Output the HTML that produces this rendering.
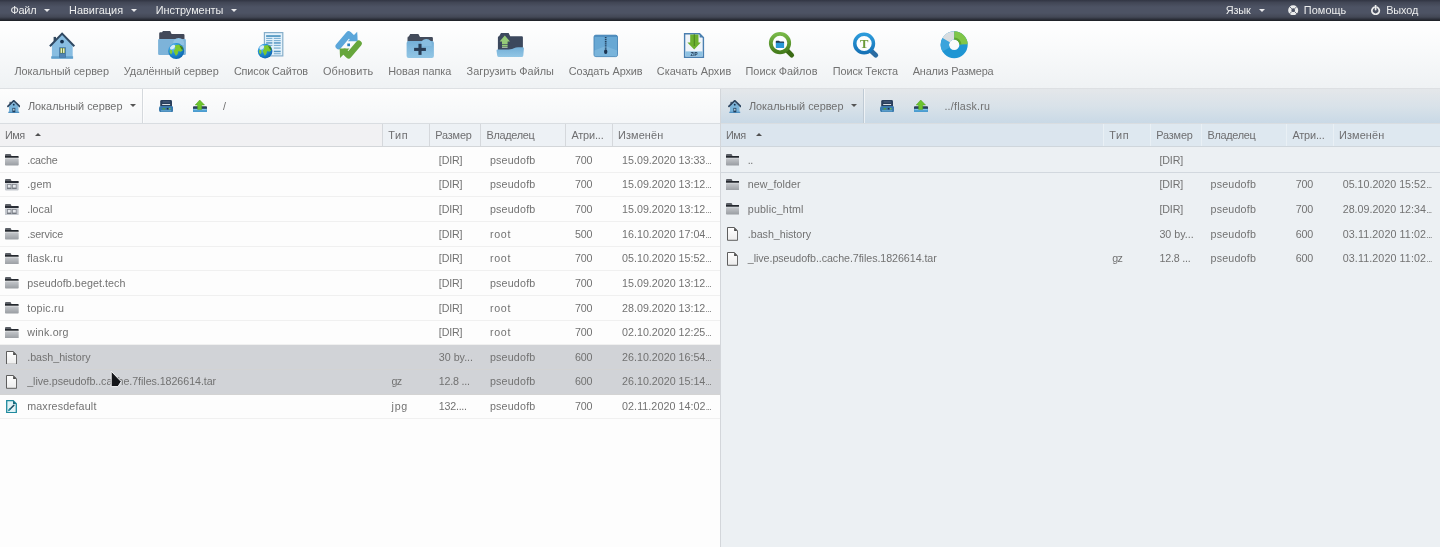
<!DOCTYPE html>
<html lang="ru">
<head>
<meta charset="utf-8">
<title>Файловый менеджер</title>
<style>
*{box-sizing:border-box;margin:0;padding:0}
html,body{width:1440px;height:547px;overflow:hidden;background:#fff}
body{font-family:"Liberation Sans","DejaVu Sans",sans-serif;font-size:10.8px;color:#666;position:relative}
.abs{position:absolute}
#menubar,#toolbar,.panel{will-change:transform}
em{font-style:normal;font-size:8.4px;letter-spacing:-.55px;margin-left:.3px}
#menubar{position:absolute;left:0;top:0;width:1440px;height:20.6px;background:linear-gradient(#313543 0,#414655 2.5px,#4d5364 7px,#4d5364 13px,#434856 17px,#2c2f39 19.3px,#1f2228 20.6px);color:#eceded}
#menubar span{position:absolute;top:0;line-height:20px;white-space:nowrap}
.caret{position:absolute;width:0;height:0;border-left:3.1px solid transparent;border-right:3.1px solid transparent;border-top:3.6px solid #e9eaec}
.caret.dk{border-top-color:#555}
.up{position:absolute;width:0;height:0;border-left:3.1px solid transparent;border-right:3.1px solid transparent;border-bottom:3.6px solid #505050}
#toolbar{position:absolute;left:0;top:20.6px;width:1440px;height:68.4px;background:linear-gradient(#fff,#f9fafb 40%,#eff2f4);border-bottom:1px solid #dde0e3}
#toolbar .lbl{position:absolute;top:43.4px;line-height:14px;color:#727272;white-space:nowrap}
#toolbar .tbi{position:absolute;top:9px}
.panel{position:absolute;top:89px;height:458px;overflow:hidden}
#left{left:0;width:719.5px;background:#fdfdfd}
#right{left:721px;width:719.5px;background:#ecf0f3}
#divider{position:absolute;left:719.5px;top:89px;width:1.8px;height:458px;background:#d3d6da}
.ptb{position:absolute;left:0;top:0;width:100%;height:34.5px;border-bottom:1px solid #d9dde1}
#left .ptb{background:linear-gradient(#fdfdfd,#f4f6f8)}
#right .ptb{background:linear-gradient(#e4e7ea,#d9e2e9 50%,#c9d9e6)}
.ptb .t{position:absolute;top:0;line-height:34px;white-space:nowrap;color:#707070}
.ptb .sep{position:absolute;left:142px;top:0;width:1px;height:34px;background:#d5d9dd;box-shadow:1px 0 0 rgba(255,255,255,.6)}
#right .ptb .sep{background:#bfcad4}
.hdr{position:absolute;left:0;top:34.5px;width:100%;height:23px;border-bottom:1px solid #d3d6d9}
#left .hdr{background:#edf1f5}
#left .hdr .srt{background:#f1f1f3}
#right .hdr{background:#dee8f0;border-bottom-color:#cfd6dc}
#right .hdr .srt{background:#dbe5ee}
#right .hdr i{background:#e9f0f5;margin-left:-.5px}
.hdr span{position:absolute;top:0;line-height:22px;white-space:nowrap;color:#6e6e70}
.hdr i{position:absolute;top:0;width:1.2px;height:22px;background:#d5d8dc}
.hdr .srt{position:absolute;left:0;top:0;width:382.4px;height:22px}
.row{position:absolute;left:0;width:100%;white-space:nowrap;border-bottom:1px solid #f0f0f0}
.row .in{position:absolute;left:0;width:100%;height:24px}
#right .row .in{left:-.4px}
.row span{position:absolute;top:.5px;line-height:23px;color:#727272}
#right .row{border-bottom-color:#d2d8de}
.row.nb{border-bottom:none}
.row.sel{background:#d1d3d7;border-bottom-color:#d3d3d3}
</style>
</head>
<body>
<svg width="0" height="0" style="position:absolute">
<defs>
<linearGradient id="gFold" x1="0" y1="0" x2="0" y2="1"><stop offset="0" stop-color="#c4c7cb"/><stop offset="1" stop-color="#999da2"/></linearGradient>
<linearGradient id="gFile" x1="0" y1="0" x2="0" y2="1"><stop offset="0" stop-color="#ffffff"/><stop offset="1" stop-color="#ececec"/></linearGradient>
<linearGradient id="gBody" x1="0" y1="0" x2="0" y2="1"><stop offset="0" stop-color="#74afd7"/><stop offset="1" stop-color="#92c6e5"/></linearGradient>
<linearGradient id="gRingG" x1="0" y1="0" x2="0" y2="1"><stop offset="0" stop-color="#78b848"/><stop offset="1" stop-color="#457d1c"/></linearGradient>
<linearGradient id="gRingB" x1="0" y1="0" x2="0" y2="1"><stop offset="0" stop-color="#2c9bdb"/><stop offset="1" stop-color="#1672b6"/></linearGradient>
<radialGradient id="gGlobe" cx="0.35" cy="0.3" r="0.8"><stop offset="0" stop-color="#7cc8f2"/><stop offset="0.45" stop-color="#1f8fd8"/><stop offset="1" stop-color="#0c5fa8"/></radialGradient>
<g id="globe">
<circle cx="0" cy="0" r="8" fill="url(#gGlobe)"/>
<path d="M-1.5,-5.6 L2.5,-6.6 L6,-4.6 L5.2,-2.2 L6.6,-0.6 L4.4,0.6 L2.2,0 L1.6,2.6 L-0.2,5 L-1.6,2.4 L-2.6,-0.6 L-0.8,-2.4 Z" fill="#7cc82e"/>
<path d="M3.2,-5.6 L6,-4.4 L7.2,-1.6 L5.4,-1.8 Z" fill="#3e7a14"/>
<path d="M-6.6,-0.8 L-4.6,-1.4 L-3.8,1 L-5,3.4 L-6.4,2 Z" fill="#86cc34"/>
<ellipse cx="-3.6" cy="-4" rx="3" ry="1.8" transform="rotate(-38 -3.6 -4)" fill="#fff" opacity=".75"/>
</g>
<g id="fold"><path d="M0,1 Q0,0 1,0 H5.6 L6.6,2.2 H0 Z" fill="#5c6067"/><path d="M0,2 H13 Q13.7,2 13.7,2.7 V3.7 H0 Z" fill="#24282e"/><rect x="0" y="4.3" width="13.7" height="7.2" rx=".8" fill="url(#gFold)"/></g>
<g id="foldx"><path d="M0,1 Q0,0 1,0 H5.6 L6.6,2.2 H0 Z" fill="#5c6067"/><path d="M0,1.9 H13 Q13.7,1.9 13.7,2.6 V4 H0 Z" fill="#2a2e36"/><rect x="0" y="4.2" width="13.7" height="7.2" rx=".8" fill="#c3c7cd"/><rect x="2.4" y="5.6" width="3.6" height="3.4" fill="#e6e9ed" stroke="#858991" stroke-width=".8"/><rect x="7.6" y="5.6" width="3.6" height="3.4" fill="#e6e9ed" stroke="#858991" stroke-width=".8"/><rect x="2" y="8.9" width="4.4" height=".9" fill="#686c74"/><rect x="7.2" y="8.9" width="4.4" height=".9" fill="#686c74"/></g>
<g id="file"><path d="M0.5,0.5 H7.3 L10.6,3.8 V13.3 H0.5 Z" fill="url(#gFile)" stroke="#5c5c5c" stroke-width="1"/><path d="M7.1,0.6 L10.5,4 H7.1 Z" fill="#4c4c4c"/></g>
<g id="img"><path d="M0.7,0.7 H7.2 L10.3,3.8 V12.7 H0.7 Z" fill="#e2f3f6" stroke="#1f8a9e" stroke-width="1.3"/><path d="M7,0.8 L10.2,4 H7 Z" fill="#17687a"/><path d="M7.9,5.2 L3.6,9.5" stroke="#1b4a60" stroke-width="1.5" stroke-linecap="round"/><path d="M3.9,9.2 L2.9,10.3" stroke="#1f8a9e" stroke-width="1.7" stroke-linecap="round"/></g>
<g id="home16"><rect x="2.5" y="1.8" width="1.3" height="3" fill="#34495e"/><path d="M2,6.6 L6.75,1.9 L11.5,6.6 V12.4 H2 Z" fill="#7ab4da"/><rect x="1.3" y="11.7" width="10.9" height="1.3" fill="#4f92c4"/><path d="M0.4,6.9 L6.75,0.7 L13.1,6.9" fill="none" stroke="#2c4560" stroke-width="1.7"/><rect x="5.4" y="7.9" width="2.9" height="4.4" fill="#20405e"/><rect x="6.2" y="8.7" width="1.3" height="1.9" fill="#cfe4f2"/><circle cx="6.75" cy="4.7" r=".9" fill="#14304e"/></g>
<g id="drive16"><path d="M2.6,0 H11.6 Q13,0 13,1.4 V6.4 H1.2 V1.4 Q1.2,0 2.6,0 Z" fill="#2a3f5c"/><rect x="3.6" y="1.5" width="7.2" height=".9" fill="#52698a"/><rect x="3.2" y="4" width="7.9" height=".9" fill="#eef2f6"/><rect x="0" y="5.9" width="14.25" height="6.3" rx="2.2" fill="#3a7aac"/><rect x="3.6" y="8.1" width="2.6" height="1.3" fill="#58a03a"/><rect x="7.8" y="7.9" width="1.6" height="1.6" fill="#1c3048"/><rect x="10" y="8.1" width="1.5" height="1.3" fill="#78c450"/><rect x="2" y="10.5" width="10.2" height=".8" fill="#7cc0e8"/></g>
<g id="up16"><rect x="0" y="6.2" width="14" height="3" rx=".9" fill="#2a3f5c"/><rect x="0" y="8.7" width="14" height="3.8" rx=".9" fill="#4a9cd0"/><rect x="0.6" y="9.3" width="12.8" height=".8" fill="#9ad4f2"/><path d="M6.75,0 L11.5,5 H8.7 V9.4 H4.6 V5 H2.2 Z" fill="#6cc42c" stroke="#4e9e1e" stroke-width=".5"/></g>
<g id="m_help"><circle cx="5.2" cy="5.2" r="3.45" fill="none" stroke="#eceded" stroke-width="3.2"/><path d="M1.4,1.4 L3.9,3.9 M9,1.4 L6.5,3.9 M1.4,9 L3.9,6.5 M9,9 L6.5,6.5" stroke="#4a5060" stroke-width=".8"/></g>
<g id="m_exit"><path d="M3.1,2.2 A3.7,3.7 0 1 0 6.1,2.2" fill="none" stroke="#eceded" stroke-width="1.7" stroke-linecap="round"/><path d="M4.6,0.6 V4.6" stroke="#eceded" stroke-width="1.7" stroke-linecap="round"/></g>
<g id="cursor"><path d="M1.2,1.2 L11.2,11.6 L8,16.6 H1.2 Z" fill="#15161a" stroke="#f2f2f4" stroke-width="1" stroke-linejoin="round"/></g>
</defs>
</svg>
<div id="menubar">
<span style="left:10.4px;font-size:10.9px;letter-spacing:-0.20px">Файл</span>
<span style="left:69.0px;font-size:10.9px;letter-spacing:0.04px">Навигация</span>
<span style="left:155.8px;font-size:10.9px;letter-spacing:-0.03px">Инструменты</span>
<span style="left:1225.8px;font-size:10.9px;letter-spacing:-0.19px">Язык</span>
<span style="left:1303.8px;font-size:10.9px;letter-spacing:0.08px">Помощь</span>
<span style="left:1386.2px;font-size:10.9px;letter-spacing:-0.10px">Выход</span>
<b class="caret" style="left:44.0px;top:8.8px"></b><b class="caret" style="left:131.0px;top:8.8px"></b><b class="caret" style="left:231.0px;top:8.8px"></b><b class="caret" style="left:1259.0px;top:8.8px"></b>
<svg class="abs" style="left:1288.3px;top:5px" width="10.4" height="10.4" viewBox="0 0 10.4 10.4"><use href="#m_help"/></svg>
<svg class="abs" style="left:1371.2px;top:4.8px" width="9.4" height="10" viewBox="0 0 9.4 10"><use href="#m_exit"/></svg>
</div>
<div id="toolbar">
<span class="lbl" style="left:14.4px;font-size:10.9px">Локальный сервер</span>
<span class="lbl" style="left:123.8px;font-size:10.9px;letter-spacing:-0.02px">Удалённый сервер</span>
<span class="lbl" style="left:233.9px;font-size:10.9px;letter-spacing:-0.16px">Список Сайтов</span>
<span class="lbl" style="left:322.9px;font-size:10.9px;letter-spacing:0.14px">Обновить</span>
<span class="lbl" style="left:388.2px;font-size:10.9px;letter-spacing:-0.03px">Новая папка</span>
<span class="lbl" style="left:466.6px;font-size:10.9px">Загрузить Файлы</span>
<span class="lbl" style="left:568.8px;font-size:10.9px;letter-spacing:-0.09px">Создать Архив</span>
<span class="lbl" style="left:656.8px;font-size:10.9px">Скачать Архив</span>
<span class="lbl" style="left:745.5px;font-size:10.9px">Поиск Файлов</span>
<span class="lbl" style="left:832.8px;font-size:10.9px;letter-spacing:-0.12px">Поиск Текста</span>
<span class="lbl" style="left:912.8px;font-size:10.9px;letter-spacing:-0.19px">Анализ Размера</span>
</div>
<svg class="abs" style="left:0;top:0" width="1440" height="89" viewBox="0 0 1440 89">
<!-- local server -->
<g>
<rect x="53.6" y="36.9" width="2.4" height="4.4" fill="#34495e"/>
<path d="M51.9,45 L62.1,34.2 L72.7,45 V58.5 H51.9 Z" fill="#88bde1"/>
<rect x="51.2" y="56.3" width="21.9" height="2.4" fill="#5f9fcc"/>
<path d="M49.9,46.3 L62.1,33.6 L74.3,46.3" fill="none" stroke="#2f4862" stroke-width="2"/>
<circle cx="62" cy="41.6" r="1.9" fill="#14304e"/>
<rect x="59.2" y="47.3" width="6.6" height="10.4" fill="#3d6f9c"/>
<rect x="60" y="48" width="5" height="5.2" fill="#5c7d34"/>
<rect x="60.6" y="48.3" width="1.5" height="4.6" fill="#e8f0c4"/>
<rect x="63" y="48.3" width="1.5" height="4.6" fill="#e8f0c4"/>
<rect x="60" y="53.7" width="5" height="3.8" fill="#4f83b4"/>
</g>
<!-- remote server -->
<g>
<path d="M159.2,39.5 V33.4 Q159.2,32.2 160.4,32.2 H162 L163,31 H170.2 L171.6,34.1 H183.4 Q184.5,34.1 184.5,35.2 V39.5 Z" fill="#424858"/>
<rect x="158.1" y="38.9" width="27.8" height="16" rx="1.2" fill="#7db3d9"/>
<path d="M173.2,45 A5.6,5.6 0 1 1 184,45 Z" fill="#8fc2e4"/>
<use href="#globe" transform="translate(176.2 51.1)"/>
</g>
<!-- sites list -->
<g>
<rect x="264.4" y="32.6" width="18.4" height="23.3" fill="#e4f2fb" stroke="#86aeca" stroke-width="1.2"/>
<rect x="266.1" y="35.1" width="14.6" height="1.9" fill="#5d9ec6"/>
<g fill="#5596c2">
<rect x="266.1" y="37.9" width="6.3" height=".8"/><rect x="273.8" y="37.9" width="6.9" height=".8"/>
<rect x="266.1" y="40.3" width="6.3" height=".8"/><rect x="273.8" y="40.3" width="6.9" height=".8"/>
<rect x="266.1" y="42.2" width="6.3" height="1.5"/><rect x="273.8" y="42.2" width="6.9" height="1.5"/>
<rect x="266.1" y="44.9" width="6.3" height=".8"/><rect x="273.8" y="44.9" width="6.9" height=".8"/>
<rect x="273.8" y="47.6" width="6.9" height=".9"/>
<rect x="273.8" y="50.7" width="6.9" height="1.5"/>
<rect x="273.8" y="53.4" width="6.9" height=".8"/>
</g>
<use href="#globe" transform="translate(265.1 51.1) scale(.92)"/>
</g>
<!-- refresh -->
<g>
<g id="rfa">
<path d="M338.5,46.2 L348.7,34.2 L352.6,37.9" fill="none" stroke="#5ba6da" stroke-width="6" stroke-linecap="round" stroke-linejoin="round"/>
<path d="M357.2,31.8 L357.7,41.2 L347.8,41.2 Z" fill="#5ba6da"/>
</g>
<g transform="rotate(180 348.65 44.85)">
<path d="M338.5,46.2 L348.7,34.2 L352.6,37.9" fill="none" stroke="#66a63c" stroke-width="6" stroke-linecap="round" stroke-linejoin="round"/>
<path d="M357.2,31.8 L357.7,41.2 L347.8,41.2 Z" fill="#66a63c"/>
</g>
<rect x="347.3" y="43.5" width="2.7" height="2.7" fill="#2a80c0"/>
</g>
<!-- new folder -->
<g>
<path d="M407.5,41.6 V37.9 Q407.5,36.6 408.8,36.6 L410.2,34.1 H418.4 L420,36.9 H431.8 Q432.9,36.9 432.9,38 V41.6 Z" fill="#434b5b"/>
<rect x="406.6" y="41" width="27.3" height="17" rx="2" fill="url(#gBody)"/>
<path d="M420.9,46 A5.6,5.6 0 1 1 431.7,46 Z" fill="#88bee1"/>
<rect x="414.1" y="47.85" width="11.8" height="3.1" fill="#283c54"/>
<rect x="418.45" y="43.8" width="3.1" height="11.1" fill="#283c54"/>
</g>
<!-- upload -->
<g>
<path d="M497.9,50.4 V37.4 Q497.9,36.2 499.1,36.2 L501,32.9 H508.6 L510.2,36.2 H521.8 Q522.9,36.2 522.9,37.3 V50.4 Z" fill="#3c485d"/>
<path d="M496.5,50.6 Q496.5,49.4 497.7,49.4 H508.6 Q511.8,49.4 513.8,48.3 Q515.8,47.3 518,47.3 H522.7 Q523.9,47.3 523.9,48.5 L523.3,55.4 Q523.1,57 521.5,57 H499 Q497.4,57 497.2,55.4 Z" fill="url(#gBody)"/>
<path d="M504.8,35.5 L510,41.4 H507.6 V44.2 H502 V41.4 H499.6 Z" fill="#96cb78"/>
<rect x="502" y="44.9" width="5.6" height="1.7" fill="#96cb78"/>
<rect x="502" y="47.2" width="5.6" height=".7" fill="#cfe6c0"/>
</g>
<!-- create archive -->
<g>
<rect x="594" y="35.2" width="23.5" height="21.4" rx="1.8" fill="#68a8d4" stroke="#4684b6" stroke-width=".9"/>
<path d="M594.4,56.2 V50.4 L605.6,46 L617.1,50.4 V56.2 Z" fill="#8ec4e4" opacity=".45"/>
<path d="M595.8,35.2 H615.7 Q617.5,35.2 617.5,36.8 H594 Q594,35.2 595.8,35.2 Z" fill="#4a88ba"/>
<path d="M605.7,36.9 V50.6" stroke="#22405e" stroke-width="1.7" stroke-dasharray="1.3 .8"/>
<ellipse cx="605.7" cy="51.8" rx="1.7" ry="2.3" fill="#1c3450"/>
</g>
<!-- download archive -->
<g>
<path d="M684.6,33.7 H699.6 L703.4,37.5 V57.2 H684.6 Z" fill="#f0f4f9" stroke="#4a7fb0" stroke-width="1.4"/>
<path d="M699.6,33.7 V37.5 H703.4 Z" fill="#4a7fb0"/>
<rect x="685.3" y="51.4" width="17.4" height="5.1" fill="#8ec2e3"/>
<text x="694" y="55.9" text-anchor="middle" font-family="Liberation Sans, sans-serif" font-weight="bold" font-size="4.6" fill="#1f3550">ZIP</text>
<path d="M690.2,34.4 H698.5 V42.4 H700.8 L694.2,49.4 L687.4,42.4 H690.2 Z" fill="#6bb02e"/>
<path d="M694.3,34.6 V46" stroke="#2c5a10" stroke-width="1.1" stroke-dasharray="1 1"/>
</g>
<!-- search files -->
<g>
<path d="M786.6,50 L791.7,55.1" stroke="#3a6a14" stroke-width="4.8" stroke-linecap="round"/>
<circle cx="780" cy="43.1" r="9.2" fill="#fdfefe" stroke="url(#gRingG)" stroke-width="3.8"/>
<path d="M775.8,43 V41.3 Q775.8,40.7 776.5,40.7 H779 L780,41.6 H783.4 Q784.1,41.6 784.1,42.3 V43 Z" fill="#23384e"/>
<rect x="775.8" y="42.8" width="8.3" height="5.2" rx=".6" fill="#2a98d8"/>
</g>
<!-- search text -->
<g>
<path d="M870.7,50.4 L875.8,55.2" stroke="#2a6ca2" stroke-width="4.8" stroke-linecap="round"/>
<circle cx="864.1" cy="43.5" r="9.35" fill="#fdfefe" stroke="url(#gRingB)" stroke-width="3.5"/>
<text x="864.1" y="48.1" text-anchor="middle" font-family="Liberation Serif, serif" font-weight="bold" font-size="12.6" fill="#6b9b38">T</text>
</g>
<!-- size analysis -->
<g fill="none" stroke-width="8.3">
<circle cx="954.2" cy="44.8" r="9.35" stroke="#1e95d3"/>
<path d="M946.1,49.48 A9.35,9.35 0 0 1 946.1,40.13" stroke="#3aa4dc"/>
<path d="M946.1,40.13 A9.35,9.35 0 0 1 954.2,35.45" stroke="#d9dde0"/>
<path d="M954.2,35.45 A9.35,9.35 0 0 1 963.54,44.4" stroke="#80c648"/>
<path d="M954.2,38.6 A6.2,6.2 0 0 1 960.4,44.5" stroke="#5fa630" stroke-width="2"/>
</g>
</svg>
<div id="left" class="panel">
<div class="ptb"><svg class="abs" style="left:6.75px;top:11px" width="13.5" height="13" viewBox="0 0 13.5 13"><use href="#home16"/></svg><span class="t" style="left:27.9px;font-size:10.9px">Локальный сервер</span><b class="caret dk" style="left:129.5px;top:15.2px"></b><i class="sep"></i><svg class="abs" style="left:159px;top:11px" width="14.25" height="12.25" viewBox="0 0 14.25 12.25"><use href="#drive16"/></svg><svg class="abs" style="left:193px;top:10.5px" width="14" height="12.5" viewBox="0 0 14 12.5"><use href="#up16"/></svg><span class="t" style="left:222.9px;font-size:10.7px">/</span></div>
<div class="hdr"><u class="srt"></u><span style="left:5.0px;font-size:10.9px;letter-spacing:-0.57px">Имя</span><span style="left:388.2px;font-size:10.9px;letter-spacing:0.70px">Тип</span><span style="left:435.2px;font-size:10.9px;letter-spacing:-0.15px">Размер</span><span style="left:486.6px;font-size:10.9px;letter-spacing:-0.32px">Владелец</span><span style="left:571.4px;font-size:10.9px;letter-spacing:-0.16px">Атри...</span><span style="left:618.0px;font-size:10.9px;letter-spacing:0.12px">Изменён</span><b class="up" style="left:34.5px;top:9.3px"></b><i style="left:382.0px"></i><i style="left:429.1px"></i><i style="left:480.0px"></i><i style="left:565.1px"></i><i style="left:612.2px"></i></div>
<div class="row" style="top:59.20px;height:24.64px"><div class="in" style="top:0px"><svg class="abs" style="left:5.2px;top:6.0px" width="13.7" height="11.6" viewBox="0 0 13.7 11.6"><use href="#fold"/></svg><span style="left:27.2px;font-size:10.7px;letter-spacing:-0.21px">.cache</span><span style="left:438.8px;font-size:10.7px;letter-spacing:-0.14px">[DIR]</span><span style="left:489.9px;font-size:10.7px;letter-spacing:0.20px">pseudofb</span><span style="left:575.1px;font-size:10.7px;letter-spacing:-0.23px">700</span><span style="left:622.1px;font-size:10.7px">15.09.2020 13:33<em>...</em></span></div></div>
<div class="row" style="top:83.84px;height:24.64px"><div class="in" style="top:0px"><svg class="abs" style="left:5.2px;top:6.1px" width="13.7" height="11.6" viewBox="0 0 13.7 11.6"><use href="#foldx"/></svg><span style="left:27.2px;font-size:10.7px;letter-spacing:0.14px">.gem</span><span style="left:438.8px;font-size:10.7px;letter-spacing:-0.14px">[DIR]</span><span style="left:489.9px;font-size:10.7px;letter-spacing:0.20px">pseudofb</span><span style="left:575.1px;font-size:10.7px;letter-spacing:-0.23px">700</span><span style="left:622.1px;font-size:10.7px">15.09.2020 13:12<em>...</em></span></div></div>
<div class="row" style="top:108.48px;height:24.64px"><div class="in" style="top:0px"><svg class="abs" style="left:5.2px;top:6.1px" width="13.7" height="11.6" viewBox="0 0 13.7 11.6"><use href="#foldx"/></svg><span style="left:27.2px;font-size:10.7px;letter-spacing:0.04px">.local</span><span style="left:438.8px;font-size:10.7px;letter-spacing:-0.14px">[DIR]</span><span style="left:489.9px;font-size:10.7px;letter-spacing:0.20px">pseudofb</span><span style="left:575.1px;font-size:10.7px;letter-spacing:-0.23px">700</span><span style="left:622.1px;font-size:10.7px">15.09.2020 13:12<em>...</em></span></div></div>
<div class="row" style="top:133.12px;height:24.64px"><div class="in" style="top:0px"><svg class="abs" style="left:5.2px;top:6.0px" width="13.7" height="11.6" viewBox="0 0 13.7 11.6"><use href="#fold"/></svg><span style="left:27.2px;font-size:10.7px;letter-spacing:-0.11px">.service</span><span style="left:438.8px;font-size:10.7px;letter-spacing:-0.14px">[DIR]</span><span style="left:489.9px;font-size:10.7px;letter-spacing:0.69px">root</span><span style="left:575.1px;font-size:10.7px;letter-spacing:-0.23px">500</span><span style="left:622.1px;font-size:10.7px">16.10.2020 17:04<em>...</em></span></div></div>
<div class="row" style="top:157.76px;height:24.64px"><div class="in" style="top:0px"><svg class="abs" style="left:5.2px;top:6.0px" width="13.7" height="11.6" viewBox="0 0 13.7 11.6"><use href="#fold"/></svg><span style="left:27.2px;font-size:10.7px;letter-spacing:0.17px">flask.ru</span><span style="left:438.8px;font-size:10.7px;letter-spacing:-0.14px">[DIR]</span><span style="left:489.9px;font-size:10.7px;letter-spacing:0.69px">root</span><span style="left:575.1px;font-size:10.7px;letter-spacing:-0.23px">700</span><span style="left:622.1px;font-size:10.7px">05.10.2020 15:52<em>...</em></span></div></div>
<div class="row" style="top:182.40px;height:24.64px"><div class="in" style="top:0px"><svg class="abs" style="left:5.2px;top:6.0px" width="13.7" height="11.6" viewBox="0 0 13.7 11.6"><use href="#fold"/></svg><span style="left:27.2px;font-size:10.7px;letter-spacing:0.08px">pseudofb.beget.tech</span><span style="left:438.8px;font-size:10.7px;letter-spacing:-0.14px">[DIR]</span><span style="left:489.9px;font-size:10.7px;letter-spacing:0.20px">pseudofb</span><span style="left:575.1px;font-size:10.7px;letter-spacing:-0.23px">700</span><span style="left:622.1px;font-size:10.7px">15.09.2020 13:12<em>...</em></span></div></div>
<div class="row" style="top:207.04px;height:24.64px"><div class="in" style="top:0px"><svg class="abs" style="left:5.2px;top:6.0px" width="13.7" height="11.6" viewBox="0 0 13.7 11.6"><use href="#fold"/></svg><span style="left:27.2px;font-size:10.7px;letter-spacing:0.23px">topic.ru</span><span style="left:438.8px;font-size:10.7px;letter-spacing:-0.14px">[DIR]</span><span style="left:489.9px;font-size:10.7px;letter-spacing:0.69px">root</span><span style="left:575.1px;font-size:10.7px;letter-spacing:-0.23px">700</span><span style="left:622.1px;font-size:10.7px">28.09.2020 13:12<em>...</em></span></div></div>
<div class="row" style="top:231.68px;height:24.64px"><div class="in" style="top:0px"><svg class="abs" style="left:5.2px;top:6.0px" width="13.7" height="11.6" viewBox="0 0 13.7 11.6"><use href="#fold"/></svg><span style="left:27.2px;font-size:10.7px;letter-spacing:0.22px">wink.org</span><span style="left:438.8px;font-size:10.7px;letter-spacing:-0.14px">[DIR]</span><span style="left:489.9px;font-size:10.7px;letter-spacing:0.69px">root</span><span style="left:575.1px;font-size:10.7px;letter-spacing:-0.23px">700</span><span style="left:622.1px;font-size:10.7px">02.10.2020 12:25<em>...</em></span></div></div>
<div class="row sel" style="top:255.82px;height:25.14px"><div class="in" style="top:0.5px"><svg class="abs" style="left:6.1px;top:5.2px" width="11.1" height="13.8" viewBox="0 0 11.1 13.8"><use href="#file"/></svg><span style="left:27.2px;font-size:10.7px;letter-spacing:-0.02px">.bash_history</span><span style="left:438.8px;font-size:10.7px">30 by...</span><span style="left:489.9px;font-size:10.7px;letter-spacing:0.20px">pseudofb</span><span style="left:575.1px;font-size:10.7px;letter-spacing:-0.23px">600</span><span style="left:622.1px;font-size:10.7px">26.10.2020 16:54<em>...</em></span></div></div>
<div class="row sel" style="top:280.96px;height:24.64px"><div class="in" style="top:0px"><svg class="abs" style="left:6.1px;top:5.2px" width="11.1" height="13.8" viewBox="0 0 11.1 13.8"><use href="#file"/></svg><span style="left:27.2px;font-size:10.7px;letter-spacing:-0.06px">_live.pseudofb..cache.7files.1826614.tar</span><span style="left:391.6px;font-size:10.7px;letter-spacing:-0.70px">gz</span><span style="left:438.8px;font-size:10.7px;letter-spacing:-0.20px">12.8 ...</span><span style="left:489.9px;font-size:10.7px;letter-spacing:0.20px">pseudofb</span><span style="left:575.1px;font-size:10.7px;letter-spacing:-0.23px">600</span><span style="left:622.1px;font-size:10.7px">26.10.2020 15:14<em>...</em></span></div></div>
<div class="row" style="top:305.60px;height:24.64px"><div class="in" style="top:0px"><svg class="abs" style="left:5.9px;top:5.4px" width="11" height="13.4" viewBox="0 0 11 13.4"><use href="#img"/></svg><span style="left:27.2px;font-size:10.7px;letter-spacing:0.17px">maxresdefault</span><span style="left:391.6px;font-size:10.7px;letter-spacing:0.70px">jpg</span><span style="left:438.8px;font-size:10.7px;letter-spacing:-0.24px">132....</span><span style="left:489.9px;font-size:10.7px;letter-spacing:0.20px">pseudofb</span><span style="left:575.1px;font-size:10.7px;letter-spacing:-0.23px">700</span><span style="left:622.1px;font-size:10.7px;letter-spacing:0.06px">02.11.2020 14:02<em>...</em></span></div></div>
</div>
<div id="divider"></div>
<div id="right" class="panel">
<div class="ptb"><svg class="abs" style="left:6.75px;top:11px" width="13.5" height="13" viewBox="0 0 13.5 13"><use href="#home16"/></svg><span class="t" style="left:27.9px;font-size:10.9px">Локальный сервер</span><b class="caret dk" style="left:129.5px;top:15.2px"></b><i class="sep"></i><svg class="abs" style="left:159px;top:11px" width="14.25" height="12.25" viewBox="0 0 14.25 12.25"><use href="#drive16"/></svg><svg class="abs" style="left:193px;top:10.5px" width="14" height="12.5" viewBox="0 0 14 12.5"><use href="#up16"/></svg><span class="t" style="left:223.4px;font-size:10.7px;letter-spacing:0.22px">../flask.ru</span></div>
<div class="hdr"><u class="srt"></u><span style="left:5.0px;font-size:10.9px;letter-spacing:-0.57px">Имя</span><span style="left:388.2px;font-size:10.9px;letter-spacing:0.70px">Тип</span><span style="left:435.2px;font-size:10.9px;letter-spacing:-0.15px">Размер</span><span style="left:486.6px;font-size:10.9px;letter-spacing:-0.32px">Владелец</span><span style="left:571.4px;font-size:10.9px;letter-spacing:-0.16px">Атри...</span><span style="left:618.0px;font-size:10.9px;letter-spacing:0.12px">Изменён</span><b class="up" style="left:34.5px;top:9.3px"></b><i style="left:382.0px"></i><i style="left:429.1px"></i><i style="left:480.0px"></i><i style="left:565.1px"></i><i style="left:612.2px"></i></div>
<div class="row" style="top:59.20px;height:24.64px"><div class="in" style="top:0px"><svg class="abs" style="left:5.2px;top:6.0px" width="13.7" height="11.6" viewBox="0 0 13.7 11.6"><use href="#fold"/></svg><span style="left:27.2px;font-size:10.7px;letter-spacing:-0.45px">..</span><span style="left:438.8px;font-size:10.7px;letter-spacing:-0.14px">[DIR]</span></div></div>
<div class="row nb" style="top:83.84px;height:24.64px"><div class="in" style="top:0px"><svg class="abs" style="left:5.2px;top:6.0px" width="13.7" height="11.6" viewBox="0 0 13.7 11.6"><use href="#fold"/></svg><span style="left:27.2px;font-size:10.7px;letter-spacing:0.05px">new_folder</span><span style="left:438.8px;font-size:10.7px;letter-spacing:-0.14px">[DIR]</span><span style="left:489.9px;font-size:10.7px;letter-spacing:0.20px">pseudofb</span><span style="left:575.1px;font-size:10.7px;letter-spacing:-0.23px">700</span><span style="left:622.1px;font-size:10.7px">05.10.2020 15:52<em>...</em></span></div></div>
<div class="row nb" style="top:108.48px;height:24.64px"><div class="in" style="top:0px"><svg class="abs" style="left:5.2px;top:6.0px" width="13.7" height="11.6" viewBox="0 0 13.7 11.6"><use href="#fold"/></svg><span style="left:27.2px;font-size:10.7px;letter-spacing:0.16px">public_html</span><span style="left:438.8px;font-size:10.7px;letter-spacing:-0.14px">[DIR]</span><span style="left:489.9px;font-size:10.7px;letter-spacing:0.20px">pseudofb</span><span style="left:575.1px;font-size:10.7px;letter-spacing:-0.23px">700</span><span style="left:622.1px;font-size:10.7px">28.09.2020 12:34<em>...</em></span></div></div>
<div class="row nb" style="top:133.12px;height:24.64px"><div class="in" style="top:0px"><svg class="abs" style="left:6.1px;top:5.2px" width="11.1" height="13.8" viewBox="0 0 11.1 13.8"><use href="#file"/></svg><span style="left:27.2px;font-size:10.7px;letter-spacing:-0.02px">.bash_history</span><span style="left:438.8px;font-size:10.7px">30 by...</span><span style="left:489.9px;font-size:10.7px;letter-spacing:0.20px">pseudofb</span><span style="left:575.1px;font-size:10.7px;letter-spacing:-0.23px">600</span><span style="left:622.1px;font-size:10.7px;letter-spacing:0.11px">03.11.2020 11:02<em>...</em></span></div></div>
<div class="row nb" style="top:157.76px;height:24.64px"><div class="in" style="top:0px"><svg class="abs" style="left:6.1px;top:5.2px" width="11.1" height="13.8" viewBox="0 0 11.1 13.8"><use href="#file"/></svg><span style="left:27.2px;font-size:10.7px;letter-spacing:-0.06px">_live.pseudofb..cache.7files.1826614.tar</span><span style="left:391.6px;font-size:10.7px;letter-spacing:-0.70px">gz</span><span style="left:438.8px;font-size:10.7px;letter-spacing:-0.20px">12.8 ...</span><span style="left:489.9px;font-size:10.7px;letter-spacing:0.20px">pseudofb</span><span style="left:575.1px;font-size:10.7px;letter-spacing:-0.23px">600</span><span style="left:622.1px;font-size:10.7px;letter-spacing:0.11px">03.11.2020 11:02<em>...</em></span></div></div>
</div>
<svg class="abs" style="left:110.3px;top:369.9px" width="13" height="18" viewBox="0 0 13 18"><use href="#cursor"/></svg>
</body>
</html>
